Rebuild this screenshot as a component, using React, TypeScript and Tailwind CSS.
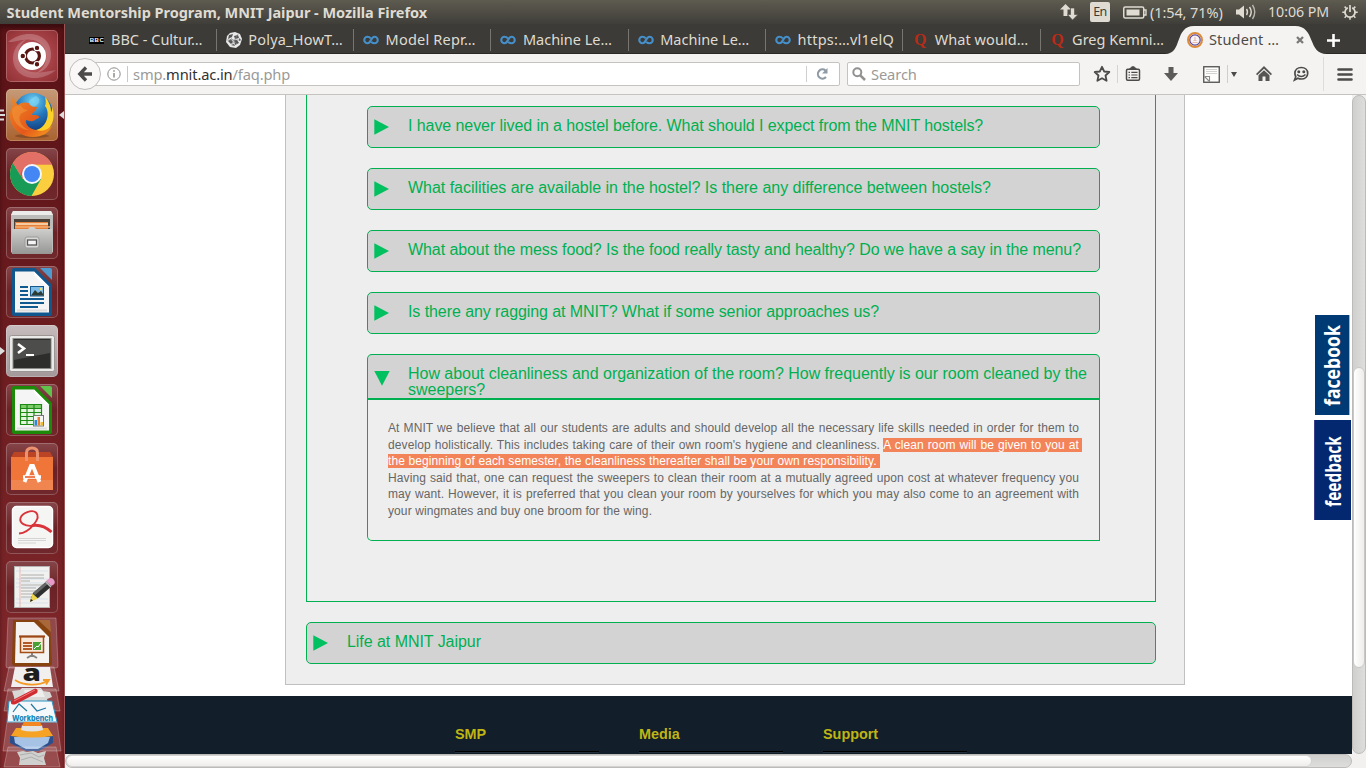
import type { ReactNode } from "react";

/* ---------- Launcher icons ---------- */

function Tile({ bg, children }: { bg: string; children: ReactNode }) {
  return (
    <div
      className={`ml-[6px] size-[52px] shrink-0 overflow-hidden rounded-[5px] shadow-[inset_0_0_0_1px_rgba(255,255,255,0.22)] ${bg}`}
    >
      <svg viewBox="0 0 52 52" className="size-full">
        {children}
      </svg>
    </div>
  );
}

const dimTile = "bg-linear-to-b from-[#854549] via-[#6b2226] to-[#71282c]";

function DashIcon() {
  return (
    <Tile bg="bg-radial from-[#c9757a] via-[#a84349] to-[#8e2f32]">
      <path d="M2 12C20-3 46 4 45 25c0 10-7 17-15 18 13-7 14-24 2-31C22 6 9 13 2 12Z" fill="#fff" opacity=".22" />
      <path d="M50 40C32 55 6 48 7 27 8 17 14 11 21 9 9 17 9 34 20 40c10 5 22 1 30 0Z" fill="#fff" opacity=".2" />
      <circle cx="26" cy="26" r="14" fill="#fff" />
      <circle cx="26.4" cy="26" r="7" fill="none" stroke="#5a1613" strokeWidth="3.2" />
      <g stroke="#fff" strokeWidth="1.2">
        <circle cx="16.8" cy="26" r="2.8" fill="#5a1613" />
        <circle cx="31" cy="17.9" r="2.8" fill="#5a1613" />
        <circle cx="31" cy="34.3" r="2.8" fill="#5a1613" />
      </g>
    </Tile>
  );
}

function FirefoxIcon() {
  return (
    <Tile bg="bg-linear-to-b from-[#c69a77] to-[#a9622f]">
      <defs>
        <radialGradient id="globe" cx=".5" cy=".2" r=".8">
          <stop offset="0" stopColor="#6fd0f2" />
          <stop offset=".5" stopColor="#2479bd" />
          <stop offset="1" stopColor="#123a7c" />
        </radialGradient>
        <linearGradient id="fox" x1="0" y1="0" x2="1" y2="1">
          <stop offset="0" stopColor="#f08a24" />
          <stop offset=".6" stopColor="#e4581b" />
          <stop offset="1" stopColor="#f6a01e" />
        </linearGradient>
      </defs>
      <ellipse cx="26" cy="47" rx="17" ry="2" fill="#5d2c10" opacity=".4" />
      <circle cx="27" cy="23.500" r="19.500" fill="url(#globe)" />
      <path d="M30 7c5 2 4 7 1 9s-5 4-8 2 1-9 7-11Z" fill="#8adcf5" opacity=".5" />
      <path d="M39 8c1 4 1 7 0 9 4 4 4 15-3 21-6 5-13 3-14 3 8 6 18 3 22-3 5-7 4-16 2-20 0 3 0 4-1 5 0-5-2-11-6-15Z" fill="#fbd229" />
      <path d="M7 7c-1 4-1 6 0 9-3 5-4 11-2 17 3 9 12 15 22 15 9 0 16-4 19-11-5 4-10 6-16 4-6-1-11-5-10-10 3 1 6 2 9 0 2-2 4-1 4-3s-4-2-7-2c0-3 5-4 5-8-4 0-7-1-8-4-4-1-8-1-11 2-2-2-4-5-5-9Z" fill="url(#fox)" />
      <path d="M6 21c2-5 6-5 9-4 2 3 4 4 7 4-3 2-6 2-8 5-2 6 2 12 9 15-9 0-17-8-17-20Z" fill="#f2953b" opacity=".6" />
    </Tile>
  );
}

function ChromeIcon() {
  return (
    <Tile bg={dimTile}>
      <circle cx="26" cy="26" r="22" fill="#fbce3f" />
      <path d="M6.950 15A22 22 0 0 0 25.500 48L35 31 17 31Z" fill="#199b58" />
      <path d="M6.950 15A22 22 0 0 1 45.800 16.500H26L17 31Z" fill="#d9534a" />
      <path d="M6.950 15A22 22 0 0 1 45.800 16.500H26Q17 16 14 27Z" fill="#e8837c" opacity=".6" />
      <circle cx="26" cy="26" r="10" fill="#f3f6fb" />
      <circle cx="26" cy="26" r="8" fill="#4487f4" />
    </Tile>
  );
}

function FilesIcon() {
  return (
    <Tile bg={dimTile}>
      <defs>
        <linearGradient id="steel" x1="0" y1="0" x2="0" y2="1">
          <stop offset="0" stopColor="#d2d2d0" />
          <stop offset="1" stopColor="#969694" />
        </linearGradient>
      </defs>
      <path d="M7 4H45L47 8V45L45 47H7L5 45V8Z" fill="#bcbcba" />
      <path d="M7 4H45L47 8H5Z" fill="#ebebea" />
      <path d="M8 12H44V23H8Z" fill="#4b4138" />
      <path d="M9 15H42V22H9Z" fill="#e5803a" />
      <path d="M10 17H42" stroke="#fae4c4" strokeWidth="1.500" />
      <path d="M9 20H44" stroke="#f5ae72" strokeWidth="1.500" />
      <path d="M6 22H22L24 20H28L30 22H46V47H6Z" fill="url(#steel)" />
      <rect x="19" y="30" width="14" height="11" rx="2" fill="#d8d8d6" stroke="#9a9a98" />
      <rect x="21.500" y="33" width="9" height="5" fill="#f5f5f5" stroke="#555" strokeWidth="1.300" />
    </Tile>
  );
}

function DocFrame({ color, flap }: { color: string; flap: string }) {
  return (
    <>
      <path d="M8 2H29L46 19V48Q46 50 44 50H8Q6 50 6 48V4Q6 2 8 2Z" fill={color} />
      <path d="M34 2H44Q46 2 46 4V14Z" fill={flap} />
      <path d="M9 5.500H28L43 20.500V46.500H9Z" fill="#f5f5f5" />
      <path d="M28 5.500V9L39 20.500H43Z" fill="#fff" />
      <path d="M11 44.500H41" stroke="#ddd" strokeWidth="2" />
    </>
  );
}

function WriterIcon() {
  return (
    <Tile bg={dimTile}>
      <DocFrame color="#0f578c" flap="#4f9bd0" />
      <path d="M14 21H22M14 25H22M14 29H22M14 33H38M14 37H38M14 41H32" stroke="#115a8f" strokeWidth="1.900" />
      <rect x="24.500" y="20.500" width="13" height="9.500" fill="#7dbce6" stroke="#16598c" />
      <path d="M25 29.500 29 24 32 27 35 25 37 28V29.500Z" fill="#2c3b33" />
      <circle cx="35" cy="23" r="1.200" fill="#f8e15b" />
    </Tile>
  );
}

function TerminalIcon() {
  return (
    <Tile bg="bg-linear-to-b from-[#c6bcbd] to-[#a3999a]">
      <rect x="3.500" y="10.500" width="45" height="36" rx="2" fill="#e9e9e7" stroke="#9b9594" />
      <rect x="7" y="13.500" width="38" height="30" fill="#2d2d2b" stroke="#8a8a88" />
      <path d="M8 15H44V28L8 35Z" fill="#4d4d4b" />
      <path d="M12 19 18 23.500 12 28" fill="none" stroke="#fff" strokeWidth="2.600" />
      <path d="M20 30H28" stroke="#fff" strokeWidth="2" />
    </Tile>
  );
}

function CalcIcon() {
  return (
    <Tile bg={dimTile}>
      <DocFrame color="#1c8a08" flap="#5fc24a" />
      <rect x="14" y="20" width="22" height="21" fill="#e4f5df" />
      <rect x="14" y="20" width="22" height="4" fill="#7ecb6b" />
      <path d="M14.500 20V41M21 20V41M28 20V41M35.500 20V41M14 20.500H36M14 24.500H36M14 28.500H36M14 32.500H36M14 36.500H36M14 40.500H36" stroke="#1c8a12" strokeWidth="1.200" />
      <rect x="27.500" y="31.500" width="10" height="10.500" fill="#f6f6f6" stroke="#777" />
      <path d="M28.500 36H31V41.500H28.500Z" fill="#2b8bd0" />
      <path d="M31.500 33H34V41.500H31.500Z" fill="#ec7a2c" />
      <path d="M34.500 38H37V41.500H34.500Z" fill="#f3b928" />
    </Tile>
  );
}

function SoftwareIcon() {
  return (
    <Tile bg={dimTile}>
      <path d="M8 9 44 9 47 14H5Z" fill="#ba4424" />
      <path d="M5 14H47V47H5Z" fill="#ef7539" />
      <path d="M5 37H47V47H5Z" fill="#f18550" />
      <path d="M20.500 18V10Q20.500 5 26 5T31.500 10V18" fill="none" stroke="#ec9270" strokeWidth="3" />
      <path d="M18.500 39 25 23H27L33.500 39" fill="none" stroke="#fff" strokeWidth="3.800" />
      <path d="M17 34H35" stroke="#fff" strokeWidth="3.600" />
      <path d="M19 34H29" stroke="#e8551d" strokeWidth="1.500" />
    </Tile>
  );
}

function PdfIcon() {
  return (
    <Tile bg={dimTile}>
      <rect x="6.500" y="4.500" width="40" height="41" rx="4" fill="#f5f5f4" stroke="#fff" strokeWidth="1.500" />
      <path d="M12 36.500H40M12 38.500H40M12 41H30" stroke="#ccc" strokeWidth=".8" />
      <path d="M13 31.500C23 31 36 16 30 10.500 26 7 16 11 14.500 16 13 21 19 25 28 23.500" fill="none" stroke="#d9343a" strokeWidth="1.900" />
      <path d="M26 23.500C34 22 40 25 45.500 30" fill="none" stroke="#d9343a" strokeWidth="3" />
    </Tile>
  );
}

function EditorIcon() {
  return (
    <Tile bg={dimTile}>
      <rect x="8.500" y="5.500" width="35" height="41" fill="#f1f1ef" stroke="#b4b4b2" />
      <path d="M10 10H42M10 18H42M10 22H42M10 26H42M10 38H42M10 42H42" stroke="#c9d8e8" strokeWidth=".6" />
      <path d="M15 14H38M15 17H38M15 20H24M15 24H38M15 27H30M15 30H36M15 33H28M15 36H34" stroke="#a0a09e" strokeWidth=".8" />
      <path d="M14 6V46" stroke="#e8a0a0" strokeWidth=".7" />
      <path d="M24 40 27 32 41 20 46 25 32 37Z" fill="#2e302f" />
      <path d="M27 32 41 20 43 22 29 34Z" fill="#646766" />
      <path d="M24 41 26.500 32.500 32 37.500Z" fill="#ecd44b" />
      <path d="M24 41 25 38 27 39.500Z" fill="#222" />
      <path d="M40 20 43 17.500Q46 16 48 19T47 24L45 25Z" fill="#e59ac7" />
      <path d="M39.500 20.500 45 26" stroke="#bbb" strokeWidth="1.500" />
    </Tile>
  );
}

/* Impress tile followed by the collapsed tiles at the foot of the launcher. */
function LauncherFold() {
  const tray = { fill: "#fff", fillOpacity: 0.16, stroke: "#fff", strokeOpacity: 0.25 };
  return (
    <svg viewBox="0 0 64 155" className="h-[155px] w-[64px] shrink-0">
      <path d="M8 5H56L58 53Q58 55 56 55H8Q6 55 6 53Z" {...tray} />
      <path d="M13 7H50L52 50Q52 53 49 53H15Q12 53 12 50Z" fill="#86420f" />
      <path d="M38 7H50L51 19Z" fill="#a9683a" />
      <path d="M16 9H34L49 24V50H15Z" fill="#f4f3f2" />
      <rect x="20.500" y="23.500" width="23" height="16" fill="#f7e8d8" stroke="#a34d17" strokeWidth="1.500" />
      <path d="M19 23.500H45" stroke="#9b4717" strokeWidth="2" />
      <path d="M23 30H32M23 33H32M23 36H32" stroke="#b45a28" strokeWidth="2" />
      <rect x="33" y="29" width="8" height="8" fill="#48a137" />
      <path d="M34 36 37 33 38 34 41 30" stroke="#fff" fill="none" />
      <path d="M32 40V42L27 45M32 42 37 45" stroke="#85817c" strokeWidth="2" fill="none" />

      <path d="M9 54H54L59 78H4Z" {...tray} />
      <path d="M15 54H50L53 74H11Z" fill="#f2f0ee" />
      <text x="22.500" y="68" fontFamily="Open Sans, sans-serif" fontWeight="800" fontSize="22" textLength="18.500" lengthAdjust="spacingAndGlyphs" fill="#1d1d1d">
        a
      </text>
      <path d="M15 67C24 73 39 73 47 68M43 67H49L46 71.500" fill="none" stroke="#f29a25" strokeWidth="1.800" />

      <path d="M8 76H56L60 98H4Z" {...tray} />
      <path d="M12 78 20 77 22 75H41L43 78 50 79 52 84 47 86 48 90H15L14 84Z" fill="#d9d8d6" />
      <path d="M24 77H42L45 84H26Z" fill="#efeeec" />
      <path d="M9 88H52L57 109H7Z" fill="#f4f8fa" stroke="#2b94c4" />
      <path d="M13 99 19 91 27 98M31 91 37 98 46 95" fill="none" stroke="#2479a2" strokeWidth="1.200" />
      <path d="M11 88 35 75.500Q39 76 37 80L16 91Q10 93 11 88Z" fill="#cf2b31" />
      <path d="M14 88 35 77" stroke="#ef7a7a" />
      <text x="12" y="108" fontFamily="Inter, sans-serif" fontSize="8" fontWeight="800" textLength="41" lengthAdjust="spacingAndGlyphs" fill="#1485b8">
        Workbench
      </text>

      <path d="M7 109H57L61 138H3Z" {...tray} />
      <path d="M10 123H53V130L39 138H26L10 130Z" fill="#2c4f8c" />
      <path d="M14 124H50L48 130 38 136H26L15 130Z" fill="#a6c3e6" />
      <path d="M11 123 16 115H48L53 123Q32 126 11 123Z" fill="#f6a224" />
      <path d="M21 117 22 112H42L43 117Q32 120 21 117Z" fill="#e2e2e2" />
      <path d="M24 109H40L42 113H22Z" fill="#f38722" />
      <path d="M8 134H56L60 154H4Z" {...tray} />
      <path d="M17 139 23 138 27 139 33 138 38 140 46 138 44 145 46 152 19 152 20 145Z" fill="#d0d0ce" />
      <path d="M20 142 31 140 39 144 44 142M21 147 31 144 43 149" fill="none" stroke="#a4a4a2" strokeWidth=".8" />
    </svg>
  );
}

function Launcher() {
  return (
    <aside className="relative flex h-[744px] w-[65px] shrink-0 flex-col gap-[7px] border-r border-[#9c5356] bg-linear-to-b from-[#5a1216] to-[#842a2d] pt-[6px] shadow-[inset_0_4px_4px_rgba(0,0,0,0.35)]">
      <DashIcon />
      <FirefoxIcon />
      <ChromeIcon />
      <FilesIcon />
      <WriterIcon />
      <TerminalIcon />
      <CalcIcon />
      <SoftwareIcon />
      <PdfIcon />
      <EditorIcon />
      <div className="-mt-[7px]">
        <LauncherFold />
      </div>
      <svg viewBox="0 0 5 12" className="absolute top-[85px] left-0 h-[12px] w-[5px]">
        <path d="M0 1.500H4M0 6H5M0 10.500H4" stroke="#ddd" strokeWidth="2" />
      </svg>
      <svg viewBox="0 0 5 8" className="absolute top-[87px] left-[59px] h-[8px] w-[5px]">
        <path d="M5 0V8L0 4Z" fill="#ddd" />
      </svg>
      <svg viewBox="0 0 5 8" className="absolute top-[323px] left-0 h-[8px] w-[5px]">
        <path d="M0 0V8L5 4Z" fill="#ddd" />
      </svg>
    </aside>
  );
}

/* ---------- Top panel ---------- */

function TopPanel() {
  return (
    <header className="flex h-[24px] shrink-0 items-center bg-linear-to-b from-[#5e5b50] to-[#3f3e39] pr-[8px] pl-[6.500px] text-[14.67px] leading-[24px] text-[#dfdbd2]">
      <h1 className="flex-1 text-[14.5px] font-bold tracking-[-0.03px] whitespace-nowrap">
        Student Mentorship Program, MNIT Jaipur - Mozilla Firefox
      </h1>
      <svg viewBox="0 0 18 16" className="h-[16px] w-[18px]" fill="#dfdbd2">
        <path d="M5.500 0 11 5.500H7.500V12H3.500V5.500H0Z" />
        <path d="M12.500 16 7.500 10.500H10.500V4H14.500V10.500H18Z" stroke="#4d4b44" strokeWidth=".6" />
      </svg>
      <span className="ml-[12px] flex h-[20px] w-[20px] items-center justify-center rounded-[2px] bg-[#dfdbd2] text-[12.5px] tracking-[-0.7px] text-[#3c3b37]">
        En
      </span>
      <svg viewBox="0 0 24 13" className="ml-[13px] h-[13px] w-[24px]" fill="none" stroke="#dfdbd2">
        <rect x=".75" y="1" width="20" height="11" rx="1.500" strokeWidth="1.500" />
        <rect x="3.500" y="3.500" width="13" height="6" fill="#dfdbd2" stroke="none" />
        <path d="M21 4H23V9H21" strokeWidth="1.400" />
      </svg>
      <span className="ml-[3px] w-[74px] text-[14.5px] tracking-[-0.1px] whitespace-nowrap">(1:54, 71%)</span>
      <svg viewBox="0 0 21 16" className="ml-[12px] h-[16px] w-[21px]" fill="none" stroke="#dfdbd2" strokeWidth="1.400">
        <path d="M0 5.500H3L8 1.500V14.500L3 10.500H0Z" fill="#dfdbd2" stroke="none" />
        <path d="M10.500 5Q12.500 8 10.500 11M13.500 3Q17 8 13.500 13" />
        <path d="M16.500 1Q21 8 16.500 15" opacity=".75" />
      </svg>
      <span className="ml-[11px] w-[61px] text-[14.2px] tracking-[-0.05px] whitespace-nowrap">10:06 PM</span>
      <svg viewBox="0 0 16 16" className="ml-[13px] size-[16px]" fill="none" stroke="#dfdbd2">
        <path d="M5.800 3.700A5 5 0 1 0 10.200 3.700" strokeWidth="1.700" />
        <path d="M8 1V8" strokeWidth="1.700" />
        <path d="M4.300 4.300 2.600 2.600M11.700 4.300 13.400 2.600M3 8.300H.3M13 8.300H15.700M4.300 12 2.600 13.700M11.700 12 13.400 13.700M8 13.300V15.800" strokeWidth="1.500" />
      </svg>
    </header>
  );
}

/* ---------- Browser chrome ---------- */

function CourseraIcon() {
  return (
    <svg viewBox="0 0 16 16" className="size-[16px]">
      <path
        d="M8.300 9.800C9.200 10.900 10.100 11.300 11.500 11.300A3.250 3.250 0 0 0 11.500 4.800C7.700 4.800 8.300 11.300 4.500 11.300A3.250 3.250 0 0 1 4.500 4.800C5.900 4.800 6.800 5.200 7.700 6.300"
        fill="none"
        stroke="#458fcb"
        strokeWidth="2.100"
      />
    </svg>
  );
}

function BbcIcon() {
  return (
    <span className="flex h-[7px] w-[15px] items-center justify-center bg-black pl-[1px] font-['Liberation_Sans',sans-serif] text-[6px] leading-none font-bold tracking-[0.5px] text-white">
      BBC
    </span>
  );
}

function PolyaIcon() {
  return (
    <svg viewBox="0 0 16 16" className="size-[16px]">
      <path d="M4 1 9 0 14 2 16 7 14 13 10 16 4 15 0 10 1 4Z" fill="#e9e9e9" />
      <path d="M3 3 7 2 6 5 2 7ZM8 4 12 3 13 6 9 7ZM2 9 5 7 7 10 5 12ZM8 8 11 8 13 11 9 13ZM13 6 15 8 13 9ZM5 13 8 12 9 14Z" fill="#555" />
      <path d="M4 5 11 12M12 2 6 13M1 8H15" stroke="#888" strokeWidth=".6" />
    </svg>
  );
}

function QuoraIcon() {
  return (
    <span className="flex size-[16px] items-center justify-center font-['Liberation_Serif',serif] text-[16px] leading-none font-bold text-[#b92b17]">
      Q
    </span>
  );
}

function SealIcon() {
  return (
    <svg viewBox="0 0 16 16" className="size-[16px]">
      <circle cx="8" cy="8" r="7" fill="#fff" stroke="#dc8b3a" strokeWidth="2" />
      <circle cx="8" cy="8" r="5.200" fill="#f7f3f7" stroke="#5d4696" strokeWidth="1.200" />
      <path d="M5.500 10.500H10.500M8 5V9M6.500 8.500H9.500" stroke="#e2bfae" strokeWidth="1.200" />
    </svg>
  );
}

const tabs: { label: string; icon: ReactNode; track: string }[] = [
  { label: "BBC - Cultur…", icon: <BbcIcon />, track: "tracking-[0px]" },
  { label: "Polya_HowT…", icon: <PolyaIcon />, track: "tracking-[0.2px]" },
  { label: "Model Repr…", icon: <CourseraIcon />, track: "tracking-[0.2px]" },
  { label: "Machine Le…", icon: <CourseraIcon />, track: "tracking-[0px]" },
  { label: "Machine Le…", icon: <CourseraIcon />, track: "tracking-[0px]" },
  { label: "https:…vl1elQ", icon: <CourseraIcon />, track: "tracking-[0.25px]" },
  { label: "What would…", icon: <QuoraIcon />, track: "tracking-[0.05px]" },
  { label: "Greg Kemni…", icon: <QuoraIcon />, track: "tracking-[0px]" },
];

function TabStrip() {
  return (
    <div className="relative flex h-[30px] shrink-0 border-b border-[#2b2a27] bg-[#3c3b37] pl-[14.500px] text-[14.5px] text-[#dfdbd2]">
      {tabs.map((tab, i) => (
        <div key={i} className="flex h-[29px] w-[137.300px] items-center pt-[3px]">
          <span className="ml-[9px] flex w-[16px] justify-center">{tab.icon}</span>
          <span className={`ml-[6.500px] flex-1 whitespace-nowrap ${tab.track}`}>{tab.label}</span>
          {i < 7 && <span className="h-[22px] w-px bg-[#77756f]" />}
        </div>
      ))}
      <div className="absolute top-[2px] left-[1100px] h-[28px] w-[162px]">
        <svg viewBox="0 0 162 28" className="absolute inset-0 h-full w-full">
          <path d="M0 28C18 28 9 0 29 0H130C151 0 142 28 162 28Z" fill="#f4f3f1" />
        </svg>
        <div className="relative flex h-[27px] items-center pl-[22px] text-[#4c4b49]">
          <SealIcon />
          <span className="ml-[6px] w-[87px] tracking-[0.15px] whitespace-nowrap">Student …</span>
          <svg viewBox="0 0 8 8" className="size-[8px]">
            <path d="M1 1 7 7M7 1 1 7" stroke="#7a7977" strokeWidth="2.300" />
          </svg>
        </div>
      </div>
      <svg viewBox="0 0 13 13" className="absolute top-[10px] left-[1261.500px] size-[13px]">
        <path d="M6.500 0V13M0 6.500H13" stroke="#fff" strokeWidth="2.600" />
      </svg>
    </div>
  );
}

function NavBar() {
  return (
    <div className="flex h-[41px] shrink-0 items-center border-b border-[#c5c3c0] bg-[#f4f3f1] pl-[4px] text-[14.67px] text-[#9a9a98]">
      <div className="relative z-10 flex size-[32px] items-center justify-center rounded-full border border-[#bfbdb9] bg-[#f9f8f7]">
        <svg viewBox="0 0 16 16" className="size-[16px]">
          <path d="M9 1.500 2.800 8 9 14.500M3 8H15" fill="none" stroke="#4c4b49" strokeWidth="3.300" />
        </svg>
      </div>
      <div className="-ml-[8px] flex h-[24px] w-[747px] items-center rounded-r-[2px] border border-[#c5c3bf] bg-white pl-[13px]">
        <svg viewBox="0 0 14 14" className="size-[14px]" fill="none" stroke="#8d8d8b">
          <circle cx="7" cy="7" r="6.200" />
          <path d="M7 6V10.500M7 3.300V4.800" strokeWidth="1.500" />
        </svg>
        <span className="ml-[6px] h-[16px] w-px bg-[#c8c8c6]" />
        <span className="ml-[5px] flex-1 tracking-[-0.14px]">
          smp.<span className="text-[#32312f]">mnit.ac.in</span>/faq.php
        </span>
        <span className="h-[16px] w-px bg-[#cfcfcd]" />
        <svg viewBox="0 0 14 14" className="mr-[10px] ml-[8px] size-[14px]" fill="none" stroke="#8e9aa4">
          <path d="M10.500 3.500A4.600 4.600 0 1 0 11 10" strokeWidth="2.100" />
          <path d="M12.500 1V6.500H7Z" fill="#8e9aa4" stroke="none" />
        </svg>
      </div>
      <div className="ml-[7px] flex h-[24px] w-[233px] items-center rounded-[2px] border border-[#c5c3bf] bg-white pl-[4px]">
        <svg viewBox="0 0 14 14" className="size-[14px]" fill="none" stroke="#91918f">
          <circle cx="5.300" cy="5.300" r="4" strokeWidth="2" />
          <path d="M8.300 8.300 13 13" strokeWidth="2.500" />
        </svg>
        <span className="ml-[5px] tracking-[-0.1px]">Search</span>
      </div>
      <svg viewBox="0 0 18 18" className="ml-[13px] size-[18px]">
        <path d="M9 1.800 11.200 6.500 16.300 7 12.500 10.500 13.600 15.800 9 13.200 4.400 15.800 5.500 10.500 1.700 7 6.800 6.500Z" fill="none" stroke="#4c4b49" strokeWidth="1.800" strokeLinejoin="round" />
      </svg>
      <span className="ml-[6px] h-[18px] w-px bg-[#d5d4d1]" />
      <svg viewBox="0 0 16 16" className="ml-[7px] size-[16px]" fill="none" stroke="#4c4b49" strokeWidth="1.500">
        <rect x="1.500" y="3.300" width="13" height="11" rx="1.200" />
        <path d="M4.500 3 7 .8H9L11.500 3Z" fill="#4c4b49" strokeWidth="1" />
        <path d="M3.500 6.300H5M6.300 6.300H12.500M3.500 9H5M6.300 9H12.500M3.500 11.700H5M6.300 11.700H12.500" strokeWidth="1.200" />
      </svg>
      <svg viewBox="0 0 14 16" className="ml-[23px] h-[16px] w-[14px]">
        <path d="M4.500 1H9.500V7H14L7 15 0 7H4.500Z" fill="#5c5b59" />
      </svg>
      <svg viewBox="0 0 17 17" className="ml-[25px] size-[17px]">
        <rect x=".75" y=".75" width="15.500" height="15.500" fill="#fdfdfc" stroke="#4f4e4c" strokeWidth="1.300" />
        <path d="M3 3.500H14M3 5.500H14M3 7.500H14" stroke="#d2d2d0" />
        <path d="M1.500 10.500H6.500V16M1.500 10.500 6.500 15.500" fill="none" stroke="#8a8a88" strokeWidth="1.100" />
      </svg>
      <span className="ml-[7px] h-[18px] w-px bg-[#cfcecb]" />
      <svg viewBox="0 0 6 5" className="ml-[3px] h-[5px] w-[6px]">
        <path d="M0 0H6L3 5Z" fill="#4c4b49" />
      </svg>
      <svg viewBox="0 0 16 16" className="ml-[19px] size-[16px]" fill="#565553">
        <path d="M8 0 16 8 14.800 9.200 8 2.800 1.200 9.200 0 8Z" />
        <path d="M8 4.200 13.500 9.300V15H9.500V10.500H6.500V15H2.500V9.300Z" />
      </svg>
      <svg viewBox="0 0 16 16" className="ml-[21px] size-[16px]">
        <path d="M8.300 1.500C12 1.500 14.700 3.800 14.700 7.200S12 13 8.300 13C7 13 6 12.700 5 12.200L1.500 14 2.800 10.800C2.300 9.700 1.900 8.500 1.900 7.200 1.900 3.800 4.600 1.500 8.300 1.500Z" fill="none" stroke="#4c4b49" strokeWidth="1.700" />
        <circle cx="5.800" cy="5.700" r="1.500" fill="#4c4b49" />
        <circle cx="10.800" cy="5.700" r="1.500" fill="#4c4b49" />
        <path d="M4 8.500Q8.300 12.500 12.500 8.500" fill="none" stroke="#4c4b49" strokeWidth="1.500" />
      </svg>
      <span className="ml-[14px] h-[34px] w-px bg-[#dedcd9]" />
      <svg viewBox="0 0 16 13" className="ml-[13px] h-[13px] w-[16px]">
        <path d="M1.500 1.500H14.500M1.500 6.500H14.500M1.500 11.500H14.500" stroke="#4c4b49" strokeWidth="2.600" strokeLinecap="round" />
      </svg>
    </div>
  );
}

/* ---------- Page ---------- */

function Question({ children, track, open = false }: { children: ReactNode; track: string; open?: boolean }) {
  return (
    <div
      className={`flex border border-[#00b050] bg-[#d3d3d3] text-[16px] leading-[16px] text-[#00b050] ${track} ${
        open ? "h-[46px] rounded-t-[5px] border-b-2" : "h-[42px] rounded-[5px]"
      }`}
    >
      <svg viewBox="0 0 16 16" className={`ml-[6px] size-[16px] shrink-0 ${open ? "mt-[15px]" : "mt-[12px]"}`}>
        <path d={open ? "M.3 1H15.700L8 15.700Z" : "M.3 .3 15 8 .3 15.700Z"} fill="#00c060" />
      </svg>
      <span className="mt-[11px] ml-[18px] flex-1">{children}</span>
    </div>
  );
}

const questions = [
  { text: "I have never lived in a hostel before. What should I expect from the MNIT hostels?", track: "tracking-[-0.075px]" },
  { text: "What facilities are available in the hostel? Is there any difference between hostels?", track: "tracking-[-0.025px]" },
  { text: "What about the mess food? Is the food really tasty and healthy? Do we have a say in the menu?", track: "tracking-[-0.08px]" },
  { text: "Is there any ragging at MNIT? What if some senior approaches us?", track: "tracking-[-0.075px]" },
];

function Line({ children }: { children: ReactNode }) {
  return <p className="whitespace-nowrap text-justify [text-align-last:justify]">{children}</p>;
}

const marked = "bg-[#f3845a] text-white";

function Answer() {
  return (
    <div className="h-[141px] rounded-bl-[5px] border border-t-0 border-[#00b050] pt-[20px] pr-[20px] pl-[20px] text-[12px] leading-[16.600px] tracking-[0.1px] text-[#666]">
      <Line>At MNIT we believe that all our students are adults and should develop all the necessary life skills needed in order for them to</Line>
      <Line>
        develop holistically. This includes taking care of their own room's hygiene and cleanliness.{" "}
        <span className={`${marked} shadow-[3px_0_0_#f3845a]`}>A clean room will be given to you at</span>
      </Line>
      <p className="whitespace-nowrap">
        <span className={marked}>the beginning of each semester, the cleanliness thereafter shall be your own responsibility.&nbsp;</span>
      </p>
      <Line>Having said that, one can request the sweepers to clean their room at a mutually agreed upon cost at whatever frequency you</Line>
      <Line>may want. However, it is preferred that you clean your room by yourselves for which you may also come to an agreement with</Line>
      <p>your wingmates and buy one broom for the wing.</p>
    </div>
  );
}

function Footer() {
  return (
    <footer className="mt-[11px] flex h-[58px] gap-[40px] overflow-hidden bg-[#121e29] pl-[390px] text-[14.4px] leading-[16px] font-bold text-[#bfb514]">
      {["SMP", "Media", "Support"].map((t) => (
        <h2 key={t} className="mt-[30px] h-[27px] w-[144px] border-b border-[#24313d] shadow-[inset_0_-1px_0_#000]">
          {t}
        </h2>
      ))}
    </footer>
  );
}

function SideTabs() {
  return (
    <div className="absolute top-[220px] left-[1249px] flex w-[38px] flex-col gap-[5px] font-['Open_Sans',sans-serif] text-[22px] font-bold text-white">
      <div className="ml-px flex h-[100px] w-[34px] items-center justify-center bg-[#003a75] shadow-[1px_0_0_#9db4ce]">
        <span className="-translate-x-px -rotate-90 scale-x-[0.8] whitespace-nowrap">facebook</span>
      </div>
      <div className="flex h-[100px] w-[37px] items-center justify-center border-l border-[#3b3f8c] bg-[#04286f]">
        <span className="-translate-x-px translate-y-px -rotate-90 scale-x-[0.7] whitespace-nowrap">feedback</span>
      </div>
    </div>
  );
}

function Page() {
  return (
    <div className="relative h-[659px] w-[1287px] bg-white font-['Liberation_Sans',Arial,sans-serif]">
      <main className="ml-[220px] h-[590px] w-[900px] border border-t-0 border-[#c0c0c0] bg-[#eee] pr-[28px] pl-[20px]">
        <section className="flex h-[507px] flex-col gap-[20px] border border-t-0 border-[#00b050] pt-[11px] pr-[55px] pl-[60px]">
          {questions.map((q) => (
            <Question key={q.text} track={q.track}>
              {q.text}
            </Question>
          ))}
          <div>
            <Question open track="tracking-[-0.025px]">
              How about cleanliness and organization of the room? How frequently is our room cleaned by the sweepers?
            </Question>
            <Answer />
          </div>
        </section>
        <div className="mt-[20px]">
          <Question track="tracking-[-0.05px]">Life at MNIT Jaipur</Question>
        </div>
      </main>
      <Footer />
      <SideTabs />
    </div>
  );
}

function VerticalScroll() {
  return (
    <div className="h-[659px] w-[14px] rounded-[7px] border border-[#bcbbb9] bg-linear-to-r from-[#cfcfcd] to-[#dededc]">
      <div className="mt-[271px] h-[301px] rounded-[7px] border border-[#c9c8c6] bg-linear-to-r from-white to-[#eeedeb]" />
    </div>
  );
}

function HorizontalScroll() {
  return (
    <div className="h-[14px] w-[1287px] overflow-hidden rounded-[7px] border border-[#bcbbb9] bg-linear-to-b from-[#cfcfcd] to-[#dededc]">
      <div className="h-[12px] w-[1246px] rounded-[7px] border border-[#d3d2d0] bg-linear-to-b from-white to-[#eeedeb]" />
    </div>
  );
}

export default function App() {
  return (
    <div className="flex h-[768px] w-[1366px] flex-col overflow-hidden bg-[#f2f1ef] font-['Noto_Sans',sans-serif]">
      <TopPanel />
      <div className="flex">
        <Launcher />
        <div className="flex w-[1301px] flex-col">
          <TabStrip />
          <NavBar />
          <div className="flex">
            <Page />
            <VerticalScroll />
          </div>
          <HorizontalScroll />
        </div>
      </div>
    </div>
  );
}
